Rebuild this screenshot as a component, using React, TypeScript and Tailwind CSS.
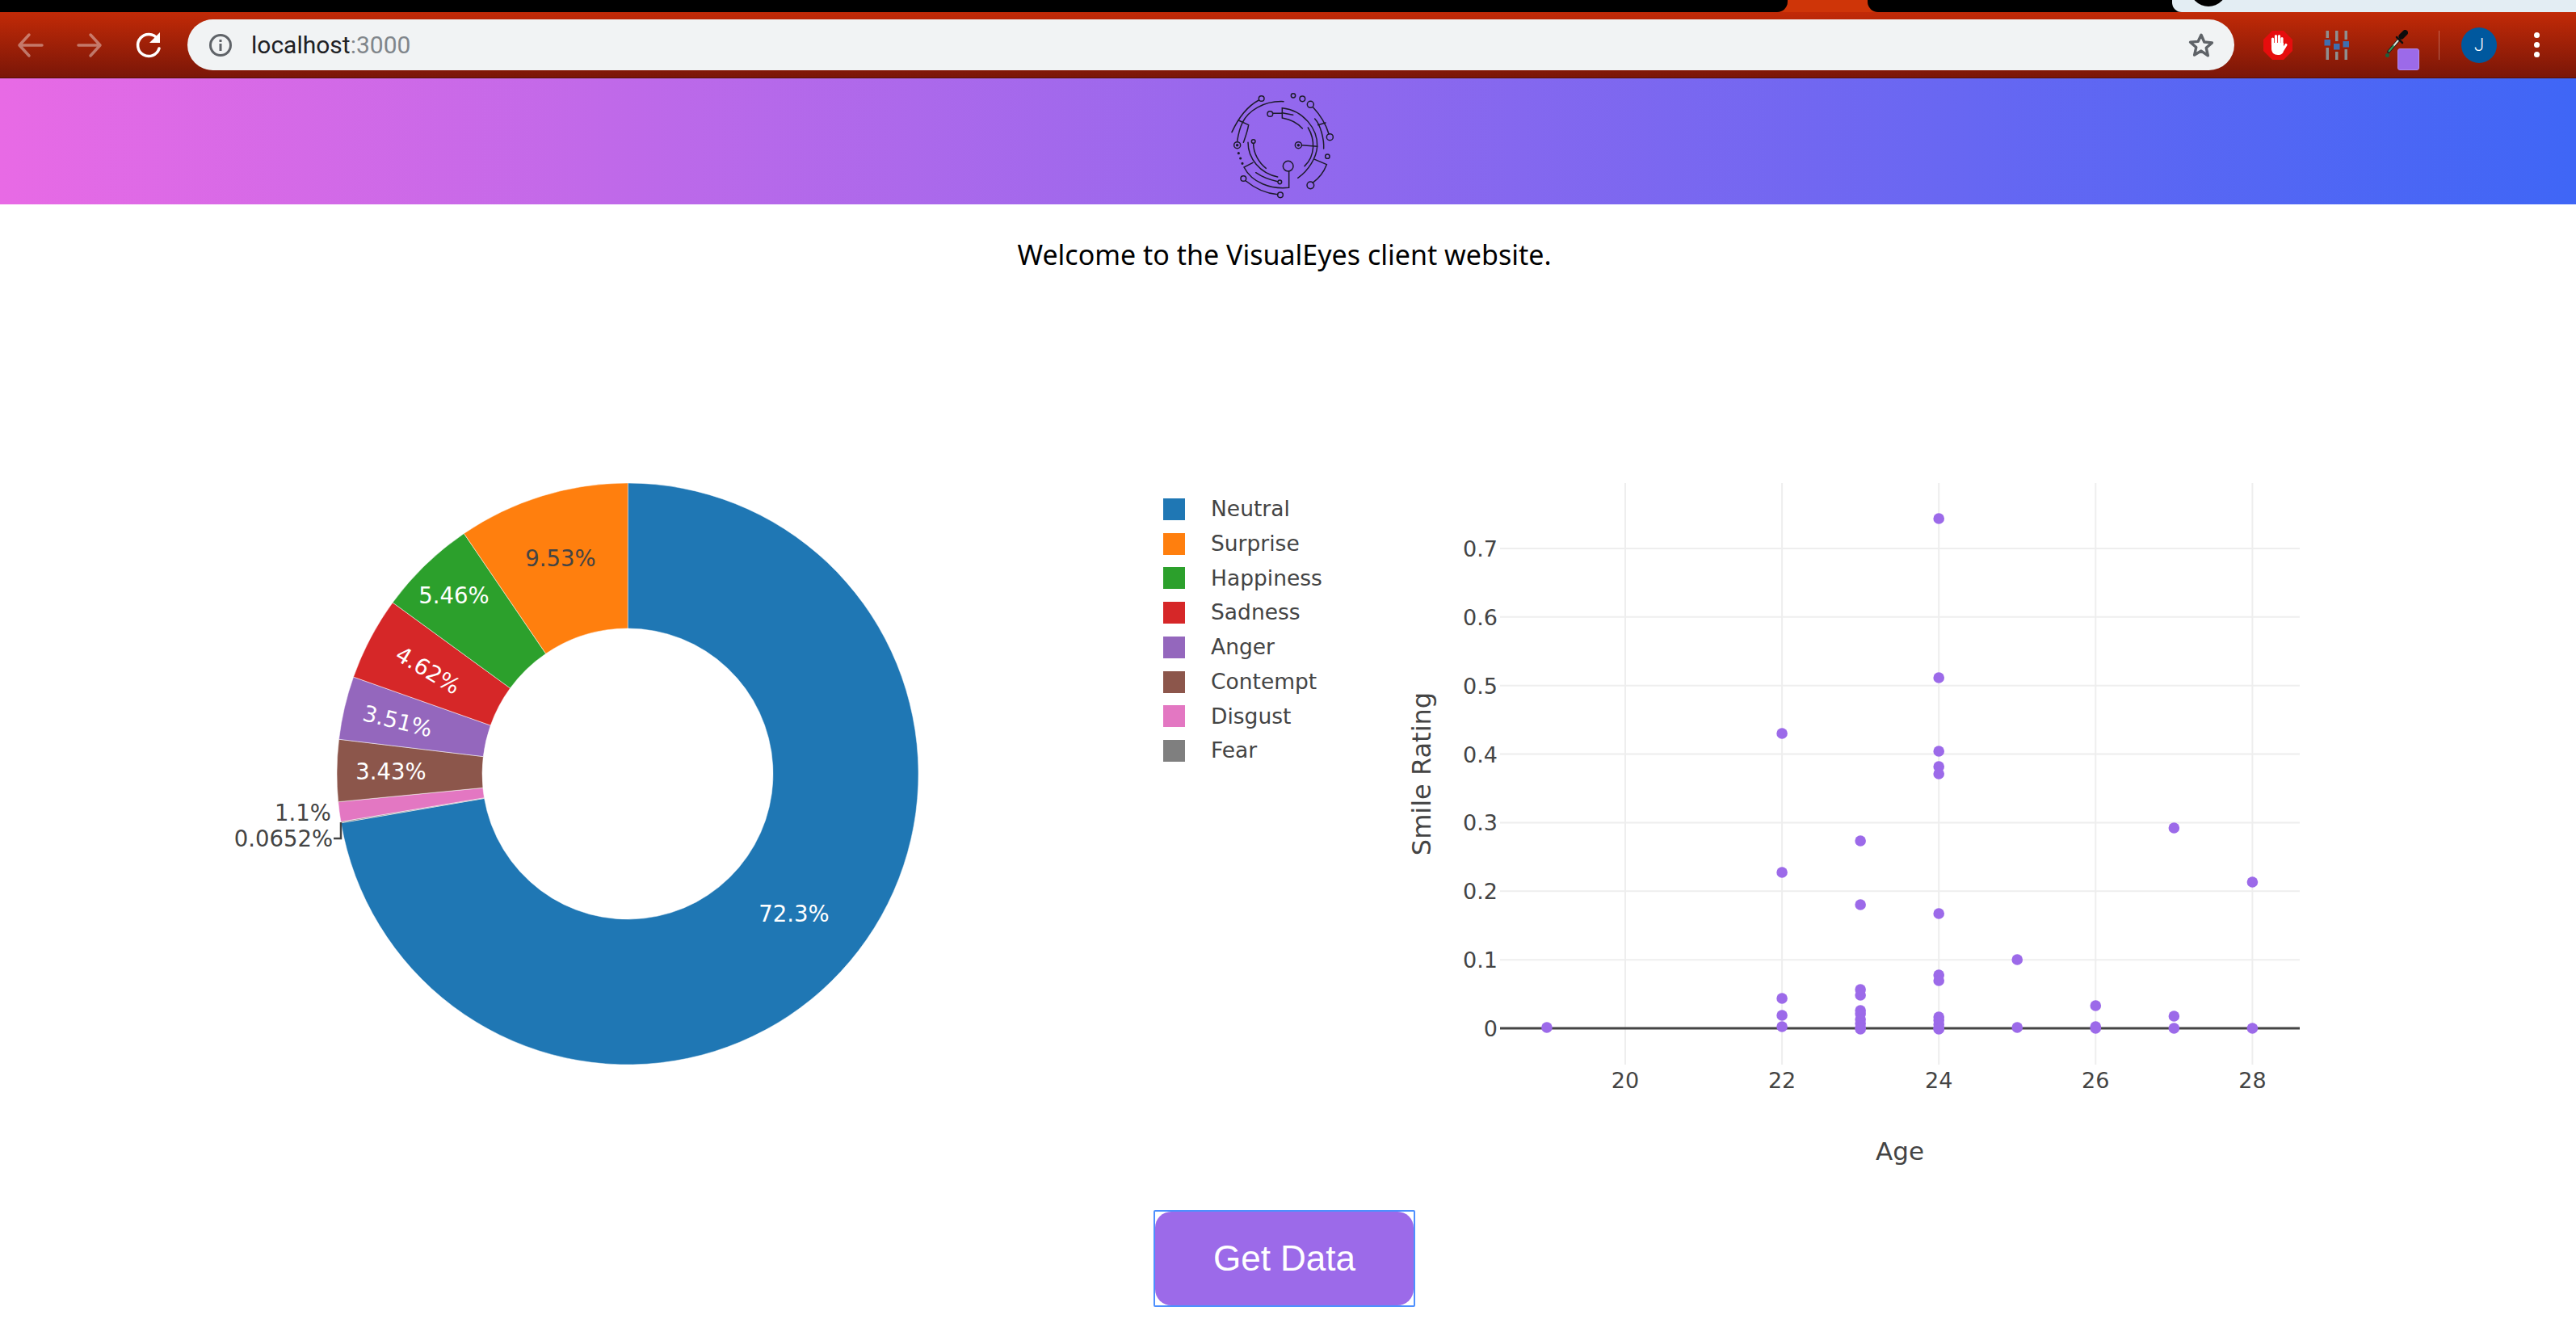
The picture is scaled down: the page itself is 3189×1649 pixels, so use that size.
// VisualEyes client - browser chrome + dashboard charts

const SANS = "font-['DejaVu_Sans',sans-serif]";

const SLICES = [
  { name: 'Neutral', pct: 72.3, color: '#1f77b4' },
  { name: 'Surprise', pct: 9.53, color: '#ff7f0e' },
  { name: 'Happiness', pct: 5.46, color: '#2ca02c' },
  { name: 'Sadness', pct: 4.62, color: '#d62728' },
  { name: 'Anger', pct: 3.51, color: '#9467bd' },
  { name: 'Contempt', pct: 3.43, color: '#8c564b' },
  { name: 'Disgust', pct: 1.1, color: '#e377c2' },
  { name: 'Fear', pct: 0.0652, color: '#7f7f7f' },
];

// clockwise from 12 o'clock, the way the pie is drawn
const PIE_ORDER = ['Neutral', 'Fear', 'Disgust', 'Contempt', 'Anger', 'Sadness', 'Happiness', 'Surprise'];

// age, pixel y inside the scatter svg (which starts at y=560)
const POINTS: [number, number][] = [
  [19, 712], [22, 348], [22, 520], [22, 676], [22, 697], [22, 711],
  [23, 481], [23, 560], [23, 665], [23, 672], [23, 691], [23, 695], [23, 702], [23, 707], [23, 712], [23, 714],
  [24, 82], [24, 279], [24, 370], [24, 389], [24, 398], [24, 571], [24, 647], [24, 654], [24, 699], [24, 703], [24, 708], [24, 713], [24, 714],
  [25, 628], [25, 712], [26, 685], [26, 711], [26, 713], [27, 465], [27, 698], [27, 713], [28, 532], [28, 713],
];

function ageX(age: number) {
  return 292 + 97.05 * (age - 20);
}

function slicePath(from: number, to: number) {
  const cx = 777, cy = 398, R = 360, r = 180;
  const a0 = (from / 100) * 2 * Math.PI;
  const a1 = (to / 100) * 2 * Math.PI;
  const large = a1 - a0 > Math.PI ? 1 : 0;
  const p = (rad: number, a: number) => `${cx + rad * Math.sin(a)} ${cy - rad * Math.cos(a)}`;
  return `M${p(R, a0)} A${R} ${R} 0 ${large} 1 ${p(R, a1)} L${p(r, a1)} A${r} ${r} 0 ${large} 0 ${p(r, a0)} Z`;
}

function Toolbar() {
  return (
    <div className="h-[82px] shrink-0 flex items-center border-b border-[#551005] bg-[linear-gradient(to_bottom,#c22a07,#7a1608)]">
      <div className="w-[232px] flex items-center shrink-0">
        <svg width="232" height="40" viewBox="0 0 232 40" fill="none" strokeLinecap="round" strokeLinejoin="round">
          <path d="M52 20H25M36 7 24 20l12 13" stroke="#fff" strokeOpacity="0.4" strokeWidth="3.5" />
          <path d="M97 20h27M112 7l12 13-12 13" stroke="#fff" strokeOpacity="0.4" strokeWidth="3.5" />
          <path d="M195 12a13.5 13.5 0 1 0 2 12" stroke="#fff" strokeWidth="3.5" />
          <path d="M198 4v13h-13z" fill="#fff" />
        </svg>
      </div>
      <div className="h-[63px] w-[2534px] shrink-0 rounded-full bg-[#f1f3f4] flex items-center pl-[26px] pr-[24px]">
        <svg width="30" height="30" viewBox="0 0 30 30" fill="none">
          <circle cx="15" cy="15" r="12.5" stroke="#5f6368" strokeWidth="3" />
          <rect x="13.5" y="8" width="3" height="3" fill="#5f6368" />
          <rect x="13.5" y="13" width="3" height="9" fill="#5f6368" />
        </svg>
        <span className="ml-[23px] text-[30px] leading-none font-['Roboto',sans-serif] text-[#202124]">
          localhost<span className="text-[#80868b]">:3000</span>
        </span>
        <svg className="ml-auto" width="34" height="34" viewBox="0 0 24 24" fill="none">
          <path d="m12 3 2.7 6.2 6.8.6-5.1 4.5 1.5 6.7L12 17l-5.900 3.500 1.500-6.700-5.100-4.500 6.800-.6z" stroke="#5f6368" strokeWidth="2.4" strokeLinejoin="round" />
        </svg>
      </div>
      <div className="flex-1 relative h-full flex items-center">
        <svg className="ml-[36px]" width="36" height="36" viewBox="0 0 36 36">
          <path d="M11 0h14l11 11v14L25 36H11L0 25V11z" fill="#e60d0d" />
          <g stroke="#fff" strokeWidth="3.2" strokeLinecap="round">
            <path d="M11.5 18v-8M15.5 15V6.5M19.5 15V6.5M23 16V9.5" />
            <path d="M24 24l4-6.5" />
          </g>
          <path d="M10 15h15v9c0 4-3 6-7 6-5 0-8-3-8-8z" fill="#fff" />
        </svg>
        <svg className="ml-[37px]" width="36" height="36" viewBox="0 0 36 36">
          <path d="M4.5 0H8V9H4.5zM4.5 21H8V36H4.5zM16 0h3.5v13H16zM16 26h3.5v10H16zM27.5 0H31V11h-3.500zM27.5 23H31V36h-3.500z" fill="#8f8f8f" />
          <rect x="2.5" y="11" width="7.5" height="7.5" fill="#3f6fb0" />
          <rect x="14" y="16" width="7.5" height="7.5" fill="#3f6fb0" />
          <rect x="25.5" y="13" width="7.5" height="7.5" fill="#3f6fb0" />
        </svg>
        <svg className="ml-[42px] -mt-[2px]" width="28" height="36" viewBox="0 0 28 36" strokeLinecap="round" fill="none">
          <path d="M17 12 4 27" stroke="#222" strokeWidth="4" />
          <path d="M16 13 10 20" stroke="#dfe8df" strokeWidth="2" />
          <path d="M10 20 4.5 26.5" stroke="#2f9a5c" strokeWidth="2" />
          <path d="m14 9 7 7" stroke="#111" strokeWidth="2.5" />
          <path d="M20 8l4.5-4.5" stroke="#0c0c0c" strokeWidth="7" />
          <circle cx="2.5" cy="31.5" r="2.5" fill="#1e5f3a" />
        </svg>
        <div className="absolute left-[202px] top-[45px] w-[27px] h-[27px] rounded-[3px] bg-[#9c6ae9] border border-[#b28af0]" />
        <div className="ml-[38px] w-px h-[36px] bg-white/30" />
        <div className="ml-[27px] w-[44px] h-[44px] rounded-full bg-[#00589e] flex items-center justify-center text-white text-[22px] font-['Roboto',sans-serif] font-light">
          J
        </div>
        <div className="ml-[46px] flex flex-col gap-[5px]">
          <div className="w-[7px] h-[7px] rounded-full bg-white" />
          <div className="w-[7px] h-[7px] rounded-full bg-white" />
          <div className="w-[7px] h-[7px] rounded-full bg-white" />
        </div>
      </div>
    </div>
  );
}

function Logo() {
  return (
    <svg width="220" height="156" viewBox="0 22 660 468" fill="none" stroke="#1d1b2b" strokeWidth="4.5" strokeLinecap="round">
      <circle cx="245" cy="97" r="10" />
      <path d="M235 103Q175 135 135 222" />
      <path d="M327 108C250 105 195 145 175 185 165 205 158 235 155 255" />
      <path d="M160 178 197 195C193 220 185 240 178 260" />
      <circle cx="155" cy="270" r="12" />
      <circle cx="155" cy="270" r="3" fill="#1d1b2b" />
      <circle cx="277" cy="154" r="10" />
      <path d="M287 152H322M322 132V170" />
      <path d="M322 132C400 140 455 210 452 275 450 315 420 365 380 392" />
      <path d="M322 150 362 158M325 170C355 175 380 190 397 208" />
      <path d="M418 205C445 250 445 310 405 348" />
      <circle cx="382" cy="270" r="12" />
      <circle cx="382" cy="270" r="3" fill="#1d1b2b" />
      <path d="M395 270 452 275" />
      <circle cx="363" cy="86" r="8" />
      <circle cx="397" cy="98" r="10" />
      <circle cx="427" cy="119" r="12" />
      <path d="M437 130C465 160 485 195 495 228" />
      <circle cx="499" cy="240" r="12" />
      <path d="M443 172C465 195 478 250 476 283M455 195 483 187" />
      <circle cx="490" cy="312" r="8" />
      <path d="M443 323 487 342C475 375 455 395 435 410" />
      <circle cx="427" cy="419" r="13" />
      <circle cx="344" cy="348" r="19" />
      <path d="M347 367V428C280 435 210 410 180 352L213 335" />
      <path d="M195 260C195 320 240 375 305 388" />
      <circle cx="215" cy="256" r="7" />
      <path d="M215 264C215 300 235 335 262 356" />
      <path d="M224 372C250 390 280 400 305 405" />
      <circle cx="313" cy="407" r="7" />
      <circle cx="178" cy="394" r="10" />
      <path d="M187 403C220 430 260 450 305 453" />
      <circle cx="315" cy="455" r="10" />
      <circle cx="160" cy="300" r="2.5" />
      <circle cx="167" cy="319" r="2.5" />
      <circle cx="174" cy="338" r="2.5" />
    </svg>
  );
}

function DonutChart() {
  let acc = 0;
  const arcs = PIE_ORDER.map((name) => {
    const s = SLICES.find((x) => x.name === name)!;
    const d = slicePath(acc, acc + s.pct);
    acc += s.pct;
    return <path key={s.name} d={d} fill={s.color} stroke="#fff" strokeWidth="0.5" />;
  });
  return (
    <svg width="1440" height="800" viewBox="0 0 1440 800" className="shrink-0">
      {arcs}
      <g fontFamily="DejaVu Sans, sans-serif" fontSize="27.5" textAnchor="middle">
        <text x="983" y="581" fill="#fff">72.3%</text>
        <text x="694" y="141" fill="#444">9.53%</text>
        <text x="562" y="187" fill="#fff">5.46%</text>
        <text transform="translate(525 278) rotate(31)" fill="#fff">4.62%</text>
        <text transform="translate(490 342) rotate(14)" fill="#fff">3.51%</text>
        <text x="484" y="405" fill="#fff">3.43%</text>
        <text x="375" y="456" fill="#444">1.1%</text>
        <text x="351" y="488" fill="#444">0.0652%</text>
      </g>
      <path d="M422 458V478H413" fill="none" stroke="#444" strokeWidth="2.5" />
    </svg>
  );
}

function Legend() {
  return (
    <div className={`w-[280px] shrink-0 pt-[49px] ${SANS} text-[26.5px] text-[#444]`}>
      {SLICES.map((s) => (
        <div key={s.name} className="h-[42.75px] flex items-center">
          <div className="w-[27px] h-[27px] mr-[32px]" style={{ background: s.color }} />
          <span className="leading-none">{s.name}</span>
        </div>
      ))}
    </div>
  );
}

function ScatterChart() {
  const yTicks = [0.7, 0.6, 0.5, 0.4, 0.3, 0.2, 0.1];
  const y0 = 713;
  return (
    <svg width="1200" height="900" viewBox="0 0 1200 900" className="shrink-0">
      <g stroke="#eee" strokeWidth="2">
        {[20, 22, 24, 26, 28].map((a) => (
          <line key={a} x1={ageX(a)} x2={ageX(a)} y1="38" y2="758" />
        ))}
        {yTicks.map((t) => (
          <line key={t} x1="137" x2="1127" y1={y0 - 848.6 * t} y2={y0 - 848.6 * t} />
        ))}
      </g>
      <line x1="137" x2="1127" y1={y0} y2={y0} stroke="#444" strokeWidth="3" />
      {POINTS.map(([a, y], i) => (
        <circle key={i} cx={ageX(a)} cy={y} r="6.8" fill="#9c6ae9" />
      ))}
      <g fontFamily="DejaVu Sans, sans-serif" fontSize="27" fill="#444">
        {yTicks.map((t) => (
          <text key={t} x="134" y={y0 - 848.6 * t + 10} textAnchor="end">{t.toFixed(1)}</text>
        ))}
        <text x="134" y={y0 + 10} textAnchor="end">0</text>
        {[20, 22, 24, 26, 28].map((a) => (
          <text key={a} x={ageX(a)} y="787" textAnchor="middle">{a}</text>
        ))}
        <text x="632" y="876" fontSize="31" textAnchor="middle">Age</text>
        <text transform="translate(51 398) rotate(-90)" fontSize="32" textAnchor="middle">Smile Rating</text>
      </g>
    </svg>
  );
}

export default function App() {
  return (
    <div className="w-[3189px] h-[1649px] overflow-hidden bg-white flex flex-col">
      {/* tab strip */}
      <div className="h-[15px] flex bg-[#cf3508] shrink-0">
        <div className="w-[2213px] bg-black rounded-br-[13px]" />
        <div className="w-[99px]" />
        <div className="w-[377px] bg-black rounded-bl-[13px]" />
        <div className="flex-1 bg-black">
          <div className="h-full bg-[#e3edf3] rounded-bl-[12px] pl-[22px] overflow-hidden">
            <div className="w-[46px] h-[46px] -mt-[38px] rounded-full bg-black" />
          </div>
        </div>
      </div>
      <Toolbar />
      <div className="h-[156px] shrink-0 flex justify-center pr-[9px] bg-[linear-gradient(to_right,#e86ae5,#3f66f6)]">
        <Logo />
      </div>
      <p className="mt-[43px] h-[264px] shrink-0 pr-[9px] text-center text-[34px] leading-[38px] text-black font-['Noto_Sans',sans-serif]">
        Welcome to the VisualEyes client website.
      </p>
      <div className="flex h-[938px] shrink-0">
        <DonutChart />
        <Legend />
        <ScatterChart />
      </div>
      <div className="flex justify-center pr-[9px]">
        <div className="w-[324px] h-[120px] border-2 border-[#4d90fe] rounded-[2px]">
          <button className="w-full h-full rounded-[20px] bg-[#9c6ae9] text-white text-[44px] font-['Liberation_Sans',Arial,sans-serif]">
            Get Data
          </button>
        </div>
      </div>
    </div>
  );
}
